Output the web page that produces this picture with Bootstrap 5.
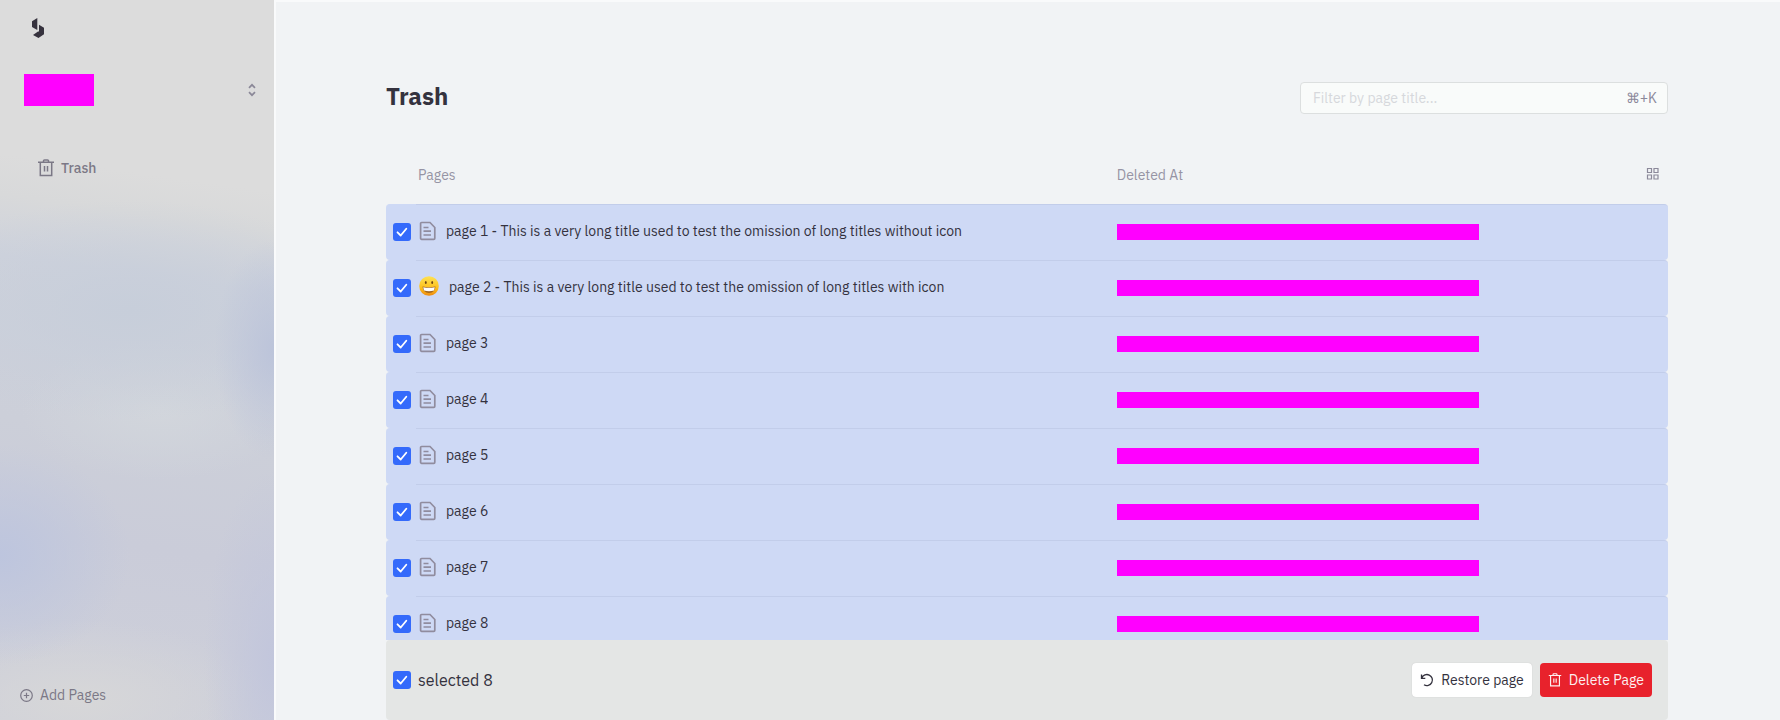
<!DOCTYPE html>
<html lang="en">
<head>
<meta charset="utf-8">
<meta name="viewport" content="width=device-width, initial-scale=1">
<title>Trash</title>
<link href="https://cdn.jsdelivr.net/npm/bootstrap@5.3.0/dist/css/bootstrap.min.css" rel="stylesheet">
<style>
  body { font-family: "IBM Plex Sans", Roboto, "Liberation Sans", sans-serif; font-size: 14px; line-height: 20px; color: #34323e; background: #f1f3f5; }
  svg { display: block; flex: none; }
  .side {
    width: 274px; flex: none; color: #7b7886;
    background:
      radial-gradient(ellipse 60px 110px at 100% 350px, #bcc4da, transparent),
      radial-gradient(ellipse 130px 110px at 0 555px, #bdc5de, transparent),
      radial-gradient(ellipse 70px 190px at 100% 660px, #c2c6dc, transparent),
      radial-gradient(ellipse 240px 110px at 130px 310px, #c7ceda, transparent),
      radial-gradient(ellipse 140px 70px at 160px 410px, #d2d6dc, transparent),
      radial-gradient(ellipse 190px 80px at 80px 700px, #d7d7d8, transparent),
      linear-gradient(188deg, #ced0da 0, #dcdcdc 0, #dcdcdc 190px, #d8d9da 230px, #ced2dc 290px, #cccfd9 450px, #caccd9 560px, #ced0da 100%);
  }
  .side a { color: inherit; }
  .logo { color: #36323e; padding: 17px 30px 0; height: 74px; }
  .space { padding: 0 16px 0 24px; height: 32px; }
  .redact { background: #f0f; }
  .space .redact { width: 70px; height: 32px; }
  .nav-trash { margin: 52px 38px 0; gap: 7px; font-weight: 500; }
  .add { padding: 0 20px 15px; gap: 7px; }
  .main { border-left: 2px solid #f9fafb; border-top: 2px solid #f9fafb; padding: 0 112px 0 110px; }
  .head { height: 112px; padding-top: 80px; }
  .head h1 { font-size: 24px; line-height: 28px; font-weight: 700; }
  .filter { width: 368px; height: 32px; background: #f9fbfa; border: 1px solid #dcdfdf; border-radius: 4px; padding: 0 10px 0 12px; color: #8c899a; }
  .filter input { border: 0; outline: 0; background: none; min-width: 0; padding: 0; }
  .filter input::placeholder { color: #d6d8dc; opacity: 1; }
  .list { table-layout: fixed; width: 100%; border-collapse: separate; border-spacing: 0; }
  .list th { height: 90px; padding: 51px 0 0; vertical-align: top; font-weight: 400; color: #9694a4; }
  .list td { height: 56px; padding: 0 0 1px; background: #ced9f5; border-top: 1px solid #c2cdea; }
  .list td:first-child { border-top-color: #ced9f5; border-radius: 4px 0 0 4px; }
  .list td:last-child { border-radius: 0 4px 4px 0; }
  .list th:nth-child(2) { padding-left: 2px; }
  .list td:nth-child(2) { padding: 0 0 3px 3px; }
  .list td .redact { width: 362px; height: 16px; }
  .col-tick { width: 30px; }
  .col-when { width: 43%; }
  .form-check-input.tick { display: block; float: none; width: 18px; height: 18px; margin: 0 0 0 7px; border: 0; border-radius: 3px; flex: none; }
  .form-check-input.tick:checked {
    background-color: #346afb; background-size: 18px;
    background-image: url("data:image/svg+xml,%3Csvg xmlns='http://www.w3.org/2000/svg' viewBox='0 0 18 18'%3E%3Cpath d='M4.5 9.3l3.2 3.2 5.6-6.8' fill='none' stroke='%23fff' stroke-width='1.8' stroke-linecap='round' stroke-linejoin='round'/%3E%3C/svg%3E");
  }
  .doc { color: #908c9e; margin-right: 9px; }
  .emoji { margin: 0 10px 2px 0; }
  .picked { height: 80px; background: #e4e6e5; border-radius: 4px; padding-right: 16px; gap: 7px; }
  .picked label { font-size: 16px; }
  .actions { gap: 8px; }
  .picked .btn { height: 34px; padding: 0 8px; font-size: 14px; line-height: 20px; border-radius: 4px; border: 0; gap: 7px; }
  .restore, .restore:hover { background: #fff; color: #34323e; box-shadow: 0 0 1px #bbb; }
  .delete, .delete:hover { background: #e8222c; color: #fdf0f0; }
</style>
</head>
<body>
<svg class="d-none">
  <symbol id="doc" viewBox="0 0 18 20"><path d="M2.600 1.500h8.400l4.800 5v10.800a1 1 0 0 1-1 1H2.600a1 1 0 0 1-1-1v-14.800a1 1 0 0 1 1-1z" fill="none" stroke="currentColor" stroke-width="1.700"/><path d="M4.500 6.500h5M4.500 10.200h7.500M4.500 14h7.500" stroke="currentColor" stroke-width="1.700"/></symbol>
  <symbol id="bin" viewBox="0 0 16 18"><path d="M0 3.200h16M2.300 3.500v13h11.400v-13M5.500 3V1.800Q5.500 1 6.500 1h3q1 0 1 .8V3M6.500 7v5.500M9.500 7v5.500" fill="none" stroke="currentColor" stroke-width="1.500"/></symbol>
</svg>
<div class="d-flex vh-100 overflow-hidden">
  <aside class="side d-flex flex-column">
    <div class="logo"><svg width="16" height="22" viewBox="0 0 16 22" fill="currentColor"><path d="M2 4.200L7.300 1v12L2 10z"/><path d="M9 7.800l5 3v6.400L8.500 21 3 18l5-3.400h1z"/></svg></div>
    <div class="space d-flex align-items-center justify-content-between">
      <div class="redact"></div>
      <svg width="12" height="14" viewBox="0 0 12 14" fill="none" stroke="#8b8898" stroke-width="1.700"><path d="M3 4.800l3-3 3 3M3 9.200l3 3 3-3"/></svg>
    </div>
    <a href="#" class="nav-trash d-flex align-items-center text-decoration-none"><svg width="16" height="18"><use href="#bin"/></svg>Trash</a>
    <a href="#" class="add mt-auto d-flex align-items-center text-decoration-none"><svg width="13" height="14" viewBox="0 0 13 14" fill="none" stroke="currentColor" stroke-width="1.200"><circle cx="6.500" cy="7.500" r="5.800"/><path d="M3.800 7.500h5.400M6.500 4.800v5.400"/></svg>Add Pages</a>
  </aside>
  <main class="main d-flex flex-column flex-grow-1">
    <header class="head d-flex justify-content-between flex-shrink-0">
      <h1 class="m-0">Trash</h1>
      <label class="filter d-flex align-items-center"><input type="text" class="flex-grow-1" placeholder="Filter by page title..." aria-label="Filter by page title"><span>⌘+K</span></label>
    </header>
    <div class="flex-grow-1 overflow-hidden">
      <table class="list">
        <colgroup><col class="col-tick"><col><col class="col-when"></colgroup>
        <thead><tr><th></th><th>Pages</th><th><div class="d-flex justify-content-between pe-2">Deleted At
          <svg width="14" height="18" viewBox="0 0 14 18" fill="none" stroke="#8c899a" stroke-width="1.200"><path d="M1.500 3.500h4v4h-4zM8 3.500h4v4h-4zM1.500 10h4v4h-4zM8 10h4v4h-4z"/></svg></div></th></tr></thead>
        <tbody id="rows"></tbody>
      </table>
    </div>
    <footer class="picked d-flex align-items-center flex-shrink-0">
      <input class="form-check-input tick" type="checkbox" id="all" checked>
      <label for="all" class="me-auto">selected 8</label>
      <div class="actions d-flex">
        <button type="button" class="btn restore d-flex align-items-center"><svg width="14" height="14" viewBox="0 0 14 14" fill="none" stroke="currentColor" stroke-width="1.300"><path d="M1.500 1.500v3.800h3.800M1.800 5A5.500 5.500 0 1 1 4 11.700"/></svg>Restore page</button>
        <button type="button" class="btn delete d-flex align-items-center"><svg width="14" height="14"><use href="#bin"/></svg>Delete Page</button>
      </div>
    </footer>
  </main>
</div>
<script src="https://cdn.jsdelivr.net/npm/bootstrap@5.3.0/dist/js/bootstrap.bundle.min.js"></script>
<script>
  const pages = [
    "page 1 - This is a very long title used to test the omission of long titles without icon",
    "page 2 - This is a very long title used to test the omission of long titles with icon",
    "page 3", "page 4", "page 5", "page 6", "page 7", "page 8"
  ];
  const doc = '<svg class="doc" width="18" height="20"><use href="#doc"/></svg>';
  const smile = '<svg class="emoji" width="20" height="20" viewBox="0 0 20 20"><defs><linearGradient id="face" x2="0" y2="1"><stop stop-color="#fee254"/><stop offset=".6" stop-color="#fdc01b"/><stop offset="1" stop-color="#ee8a10"/></linearGradient></defs><circle cx="10" cy="10" r="9.800" fill="url(#face)"/><ellipse cx="6.800" cy="6.500" rx=".9" ry="1.500" fill="#6b4212"/><ellipse cx="13.200" cy="6.500" rx=".9" ry="1.500" fill="#6b4212"/><path d="M3.500 10.500Q10 12 16.500 10.500 16 17 10 17T3.500 10.500z" fill="#a0641c"/><path d="M4.200 11.200Q10 12.500 15.800 11.200l-.8 3.300Q10 15.800 5 14.500z" fill="#fff"/></svg>';
  document.getElementById("rows").innerHTML = pages.map((title, i) => `
    <tr>
      <td><input class="form-check-input tick" type="checkbox" id="p${i}" checked></td>
      <td><label for="p${i}" class="d-flex align-items-center">${i === 1 ? smile : doc}<span class="text-truncate">${title}</span></label></td>
      <td><div class="redact"></div></td>
    </tr>`).join("");
</script>
</body>
</html>
